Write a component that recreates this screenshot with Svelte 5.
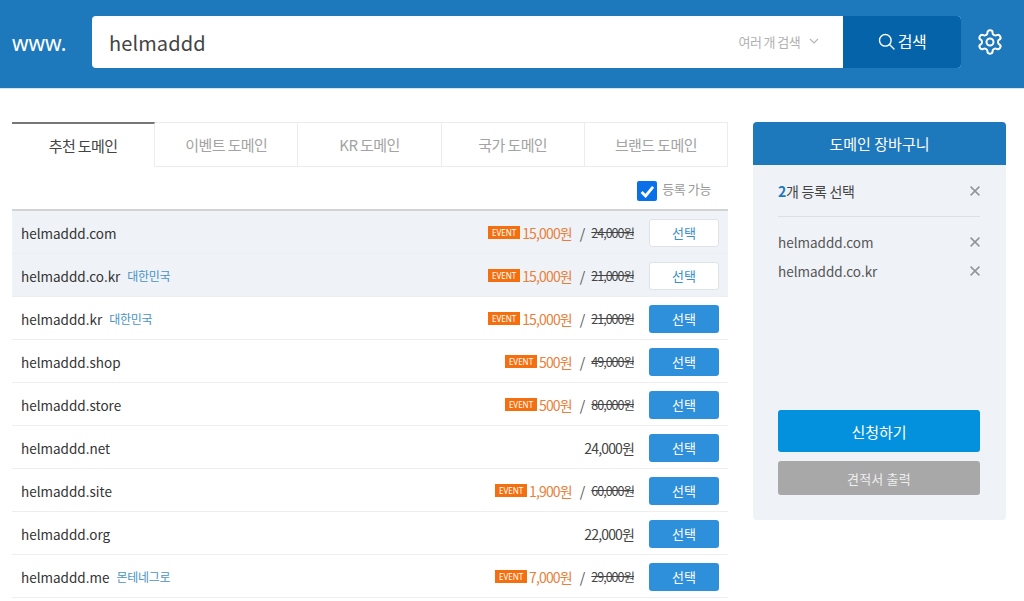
<script>
  const tabs = ['추천 도메인', '이벤트 도메인', 'KR 도메인', '국가 도메인', '브랜드 도메인'];
  const rows = [
    { name: 'helmaddd.com', price: '15,000원', old: '24,000원', sel: true },
    { name: 'helmaddd.co.kr', tag: '대한민국', price: '15,000원', old: '21,000원', sel: true },
    { name: 'helmaddd.kr', tag: '대한민국', price: '15,000원', old: '21,000원' },
    { name: 'helmaddd.shop', price: '500원', old: '49,000원' },
    { name: 'helmaddd.store', price: '500원', old: '80,000원' },
    { name: 'helmaddd.net', plain: '24,000원' },
    { name: 'helmaddd.site', price: '1,900원', old: '60,000원' },
    { name: 'helmaddd.org', plain: '22,000원' },
    { name: 'helmaddd.me', tag: '몬테네그로', price: '7,000원', old: '29,000원' }
  ];
  const cart = ['helmaddd.com', 'helmaddd.co.kr'];
</script>

{#snippet close()}
  <svg class="x" width="10" height="10" viewBox="0 0 10 10" fill="none" stroke="#8f959b" stroke-width="1.5"><path d="M.6.6l8.8 8.8M9.4.6L.6 9.4" /></svg>
{/snippet}

<div class="page">
  <header class="top">
    <span class="www">www.</span>
    <div class="search">
      <span class="query">helmaddd</span>
      <span class="multi">여러 개 검색
        <svg width="10" height="6" viewBox="0 0 10 6" fill="none" stroke="#b5b5b5" stroke-width="1.2"><path d="M1 1l4 4 4-4" /></svg>
      </span>
      <button class="go">
        <svg width="17" height="17" viewBox="0 0 17 17" fill="none" stroke="#fff" stroke-width="1.4"><circle cx="7.3" cy="7.3" r="5.8" /><path d="M11.5 11.5l4.5 4.5" stroke-linecap="round" /></svg>
        검색
      </button>
    </div>
    <svg class="gear" width="28" height="28" viewBox="0 0 24 24" fill="none" stroke="#fff" stroke-width="1.7" stroke-linecap="round" stroke-linejoin="round">
      <circle cx="12" cy="12" r="3" />
      <path d="M12.22 2h-.44a2 2 0 0 0-2 2v.18a2 2 0 0 1-1 1.73l-.43.25a2 2 0 0 1-2 0l-.15-.08a2 2 0 0 0-2.73.73l-.22.38a2 2 0 0 0 .73 2.73l.15.1a2 2 0 0 1 1 1.72v.51a2 2 0 0 1-1 1.74l-.15.09a2 2 0 0 0-.73 2.73l.22.38a2 2 0 0 0 2.73.73l.15-.08a2 2 0 0 1 2 0l.43.25a2 2 0 0 1 1 1.73V20a2 2 0 0 0 2 2h.44a2 2 0 0 0 2-2v-.18a2 2 0 0 1 1-1.73l.43-.25a2 2 0 0 1 2 0l.15.08a2 2 0 0 0 2.73-.73l.22-.39a2 2 0 0 0-.73-2.73l-.15-.08a2 2 0 0 1-1-1.74v-.5a2 2 0 0 1 1-1.74l.15-.09a2 2 0 0 0 .73-2.73l-.22-.38a2 2 0 0 0-2.73-.73l-.15.08a2 2 0 0 1-2 0l-.43-.25a2 2 0 0 1-1-1.73V4a2 2 0 0 0-2-2z" />
    </svg>
  </header>

  <main class="body">
    <section class="results">
      <nav class="tabs">
        {#each tabs as t, i}
          <div class="tab" class:active={i === 0}>{t}</div>
        {/each}
      </nav>
      <div class="filter">
        <span class="check">
          <svg width="15" height="13" viewBox="0 0 14 12" fill="none" stroke="#fff" stroke-width="2.6"><path d="M1.5 6.5l3.7 3.7 7-8.5" /></svg>
        </span>
        <span class="flabel">등록 가능</span>
      </div>
      <div class="list">
        {#each rows as r}
          <div class="row" class:sel={r.sel}>
            <span class="dname">{r.name}</span>
            {#if r.tag}<span class="tag">{r.tag}</span>{/if}
            <span class="prices">
              {#if r.plain}
                <span class="plain">{r.plain}</span>
              {:else}
                <span class="event">EVENT</span>
                <span class="price">{r.price}</span>
                <span class="slash">/</span>
                <span class="old">{r.old}</span>
              {/if}
            </span>
            <button class="pick">선택</button>
          </div>
        {/each}
      </div>
    </section>

    <aside class="cart">
      <div class="cart-head">도메인 장바구니</div>
      <div class="cart-body">
        <div class="count">
          <span><b>2</b>개 등록 선택</span>
          {@render close()}
        </div>
        <ul class="items">
          {#each cart as c}
            <li><span>{c}</span>{@render close()}</li>
          {/each}
        </ul>
        <button class="apply">신청하기</button>
        <button class="quote">견적서 출력</button>
      </div>
    </aside>
  </main>
</div>

<style>
  :global(body) {
    margin: 0;
    background: #fff;
  }
  .page {
    font-family: "Noto Sans CJK KR", "Noto Sans", sans-serif;
    color: #333;
    height: 601px;
    overflow: hidden;
  }
  button {
    font-family: inherit;
    border: 0;
    cursor: pointer;
  }
  .top {
    height: 89px;
    box-sizing: border-box;
    background: #1e78bc;
    display: flex;
    align-items: flex-start;
    padding: 16px 20px 0 12px;
    border-bottom: 1px solid #d3e6f3;
  }
  .www {
    width: 80px;
    color: #fff;
    font-family: "Noto Sans", sans-serif;
    font-size: 21px;
    line-height: 54px;
  }
  .search {
    width: 869px;
    height: 52px;
    background: #fff;
    border-radius: 4px;
    overflow: hidden;
    display: flex;
    align-items: center;
  }
  .query {
    flex: 1;
    padding-left: 17px;
    font-size: 20px;
    letter-spacing: 0.1px;
    color: #444;
  }
  .multi {
    display: flex;
    align-items: center;
    gap: 9px;
    margin-right: 24px;
    padding-bottom: 2px;
    font-size: 13px;
    letter-spacing: -0.6px;
    color: #b0b0b0;
  }
  .go {
    width: 118px;
    height: 52px;
    background: #0463a9;
    color: #fff;
    font-size: 16px;
    letter-spacing: -0.4px;
    padding: 0 0 2px;
    display: flex;
    align-items: center;
    justify-content: center;
    gap: 3px;
  }
  .gear {
    margin: 12px 0 0 15px;
  }
  .body {
    display: flex;
    align-items: flex-start;
    padding: 33px 18px 0 12px;
    gap: 25px;
  }
  .results {
    width: 716px;
  }
  .tabs {
    display: grid;
    grid-template-columns: repeat(5, 1fr);
    height: 45px;
    box-sizing: border-box;
  }
  .tab {
    display: flex;
    align-items: center;
    justify-content: center;
    font-size: 15px;
    letter-spacing: -0.6px;
    color: #a3a3a3;
    border-top: 1px solid #ececec;
    border-right: 1px solid #ececec;
    border-bottom: 1px solid #ececec;
    box-sizing: border-box;
  }
  .tab.active {
    color: #444;
    border-top: 2px solid #777;
    border-bottom: 0;
  }
  .filter {
    height: 42px;
    box-sizing: border-box;
    display: flex;
    align-items: flex-start;
    justify-content: flex-end;
    padding: 14px 17px 0 0;
    gap: 5px;
  }
  .check {
    width: 20px;
    height: 20px;
    border-radius: 2px;
    background: #0b6fe8;
    display: flex;
    align-items: center;
    justify-content: center;
  }
  .flabel {
    font-size: 13px;
    line-height: 16px;
    letter-spacing: -0.4px;
    color: #999;
  }
  .list {
    border-top: 2px solid #d2d3d5;
  }
  .row {
    height: 43px;
    box-sizing: border-box;
    display: flex;
    align-items: center;
    padding: 1px 9px 0;
    border-bottom: 1px solid #eceef1;
  }
  .row.sel {
    background: #eff2f7;
  }
  .dname {
    font-size: 13.5px;
    color: #333;
  }
  .tag {
    margin-left: 7px;
    font-size: 12px;
    letter-spacing: -0.3px;
    color: #4a94c5;
  }
  .prices {
    margin-left: auto;
    display: flex;
    align-items: center;
  }
  .event {
    width: 32px;
    height: 13px;
    background: #f46f0f;
    color: #fff;
    font-family: "Noto Sans", sans-serif;
    font-size: 8px;
    line-height: 13px;
    text-align: center;
  }
  .price {
    margin-left: 2px;
    font-size: 14px;
    letter-spacing: -0.85px;
    color: #e8803c;
  }
  .slash {
    margin: 0 6px 0 8px;
    font-size: 14px;
    color: #555;
  }
  .old {
    font-size: 12.5px;
    letter-spacing: -1px;
    color: #444;
    text-decoration: line-through;
  }
  .plain {
    font-size: 14px;
    letter-spacing: -0.85px;
    color: #444;
  }
  .pick {
    width: 70px;
    height: 28px;
    margin: 1px 0 0 15px;
    padding: 0 0 2px;
    border-radius: 3px;
    background: #2e8fdb;
    color: #fff;
    font-size: 13px;
    box-sizing: border-box;
  }
  .row.sel .pick {
    background: #fff;
    color: #3a8fc8;
    border: 1px solid #dfe3e8;
  }
  .cart {
    width: 253px;
    border-radius: 4px;
    overflow: hidden;
    background: #eff2f7;
  }
  .cart-head {
    height: 43px;
    background: #1e78bc;
    color: #fff;
    font-size: 15px;
    display: flex;
    align-items: center;
    justify-content: center;
  }
  .cart-body {
    padding: 0 26px 25px 25px;
    display: flex;
    flex-direction: column;
  }
  .count {
    height: 51px;
    border-bottom: 1px solid #dcdfe4;
    display: flex;
    align-items: center;
    justify-content: space-between;
    font-size: 14px;
    letter-spacing: -0.3px;
    color: #444;
  }
  .count b {
    color: #1e78bc;
    font-weight: 700;
  }
  .items {
    list-style: none;
    margin: 10px 0 0;
    padding: 0;
    height: 183px;
    box-sizing: border-box;
  }
  .items li {
    height: 29px;
    display: flex;
    align-items: center;
    justify-content: space-between;
    font-size: 13.5px;
    color: #555;
  }
  .apply {
    height: 42px;
    border-radius: 3px;
    background: #0390dc;
    color: #fff;
    font-size: 15px;
  }
  .quote {
    height: 34px;
    margin-top: 9px;
    border-radius: 3px;
    background: #a8a8a8;
    color: #eee;
    font-size: 13px;
    letter-spacing: 0.2px;
  }
</style>
